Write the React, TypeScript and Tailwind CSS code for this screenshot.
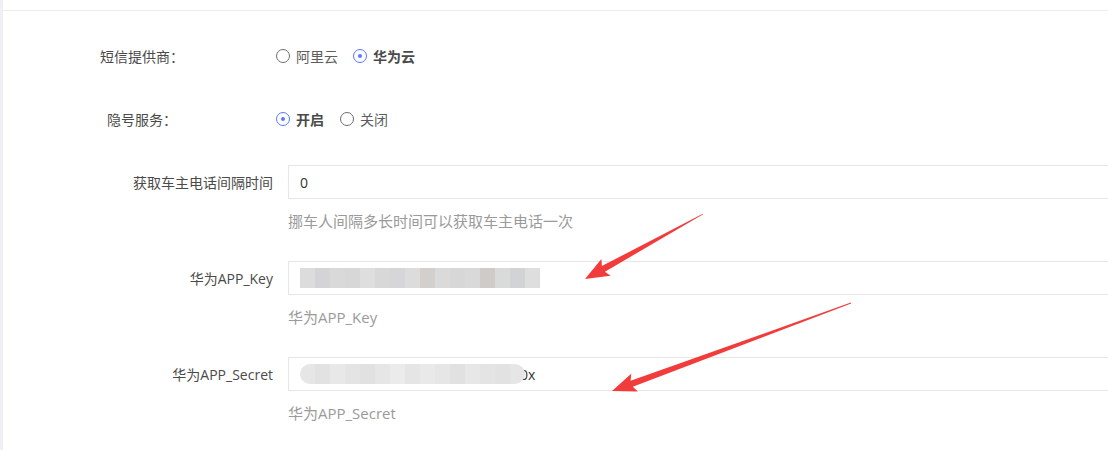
import React from "react";

const font = { fontFamily: '"Open Sans", "Noto Sans CJK SC", sans-serif' };

function Radio({ label, checked }: { label: string; checked?: boolean }) {
  return (
    <label className="flex shrink-0 items-center">
      {checked ? (
        <span className="flex h-[14px] w-[14px] shrink-0 items-center justify-center rounded-full border border-[#5b78f6]">
          <span className="h-[4px] w-[4px] rounded-full bg-[#5b78f6]" />
        </span>
      ) : (
        <span className="h-[14px] w-[14px] shrink-0 rounded-full border-[1.5px] border-[#6e6e6e]" />
      )}
      <span className={"ml-[6px] text-[14px] " + (checked ? "font-bold text-[#4a4a4a]" : "text-[#5e5e5e]")}>
        {label}
      </span>
    </label>
  );
}

// blurred redaction blocks inside the inputs
const keyShades = ["#dcdcdc", "#d4d4d6", "#d9d9d9", "#d7d7d7", "#dedede", "#d8d8d8", "#d6d6d8", "#dcdcdc", "#d2cfcd", "#dadada", "#d7d7d7", "#d9d9d9", "#cfcbc8", "#d9dbdb", "#d2d3d5", "#dedede"];
const secretShades = ["#e6e6e6", "#e2e2e2", "#e8e8e8", "#e4e4e4", "#e1e1e1", "#e6e6e6", "#ebebeb", "#e5e5e5", "#e9e9e9", "#e6e6e6", "#e1e1e1", "#e7e7e7", "#e4e4e4", "#e2e2e2", "#e6e6e6"];

function Mosaic({ shades, rounded }: { shades: string[]; rounded?: boolean }) {
  return (
    <div className={"relative z-10 flex h-[20px] shrink-0 overflow-hidden " + (rounded ? "rounded-full" : "")}>
      {shades.map((c, i) => (
        <div key={i} className="h-full w-[15px]" style={{ background: c }} />
      ))}
    </div>
  );
}

function Arrow({ tail, tip }: { tail: [number, number]; tip: [number, number] }) {
  const dx = tip[0] - tail[0];
  const dy = tip[1] - tail[1];
  const len = Math.hypot(dx, dy);
  const ux = dx / len;
  const uy = dy / len;
  const nx = -uy;
  const ny = ux;
  const head = 21;
  const bx = tip[0] - ux * head;
  const by = tip[1] - uy * head;
  const p = (x: number, y: number, w: number) => `${x + nx * w},${y + ny * w}`;
  const pts = [
    p(tail[0], tail[1], 0.4),
    p(bx, by, 3.2),
    p(bx - ux * 3, by - uy * 3, 9.5),
    `${tip[0]},${tip[1]}`,
    p(bx - ux * 3, by - uy * 3, -9.5),
    p(bx, by, -3.2),
    p(tail[0], tail[1], -0.4),
  ].join(" ");
  return <polygon points={pts} fill="#f23c3c" />;
}

function InputRow({ label, help, children }: { label: string; help: string; children: React.ReactNode }) {
  return (
    <div className="flex">
      <div className="flex h-[34px] w-[270px] shrink-0 items-center justify-end text-[14px] text-[#4a4a4a]">{label}</div>
      <div className="ml-[15px] min-w-0 flex-1 overflow-hidden">
        <div className="flex h-[34px] w-[900px] items-center border border-[#e6e6e6] px-[11px] text-[14px] text-[#333]">
          {children}
        </div>
        <div className="mt-[12px] h-[20px] text-[15px] leading-[20px] text-[#9a9a9a]">{help}</div>
      </div>
    </div>
  );
}

export default function App() {
  return (
    <div className="relative flex h-[450px] w-[1108px] overflow-hidden bg-white" style={font}>
      <div className="w-[3px] shrink-0 bg-[#eef0f4]" />
      <div className="min-w-0 flex-1 pt-[10px]">
        <div className="border-t border-[#ececec]">
          {/* 短信提供商 */}
          <div className="mt-[28px] flex h-[34px] items-center">
            <div className="w-[273px] shrink-0">
              <div className="ml-[78px] w-[122px] text-center text-[14px] text-[#4a4a4a]">短信提供商：</div>
            </div>
            <div className="flex items-center gap-[15px]">
              <Radio label="阿里云" />
              <Radio label="华为云" checked />
            </div>
          </div>

          {/* 隐号服务 */}
          <div className="mt-[29px] flex h-[34px] items-center">
            <div className="w-[273px] shrink-0">
              <div className="ml-[78px] w-[122px] text-center text-[14px] text-[#4a4a4a]">隐号服务：</div>
            </div>
            <div className="flex items-center gap-[16px]">
              <Radio label="开启" checked />
              <Radio label="关闭" />
            </div>
          </div>

          <div className="mt-[29px]">
            <InputRow label="获取车主电话间隔时间" help="挪车人间隔多长时间可以获取车主电话一次">
              0
            </InputRow>
          </div>

          <div className="mt-[30px]">
            <InputRow label="华为APP_Key" help="华为APP_Key">
              <Mosaic shades={keyShades} />
            </InputRow>
          </div>

          <div className="mt-[30px]">
            <InputRow label="华为APP_Secret" help="华为APP_Secret">
              <Mosaic shades={secretShades} rounded />
              <span className="-ml-[5px]">0x</span>
            </InputRow>
          </div>
        </div>
      </div>

      <svg className="pointer-events-none absolute left-0 top-0" width="1108" height="450">
        <Arrow tail={[703, 214]} tip={[585, 279]} />
        <Arrow tail={[851, 303]} tip={[612, 391]} />
      </svg>
    </div>
  );
}
